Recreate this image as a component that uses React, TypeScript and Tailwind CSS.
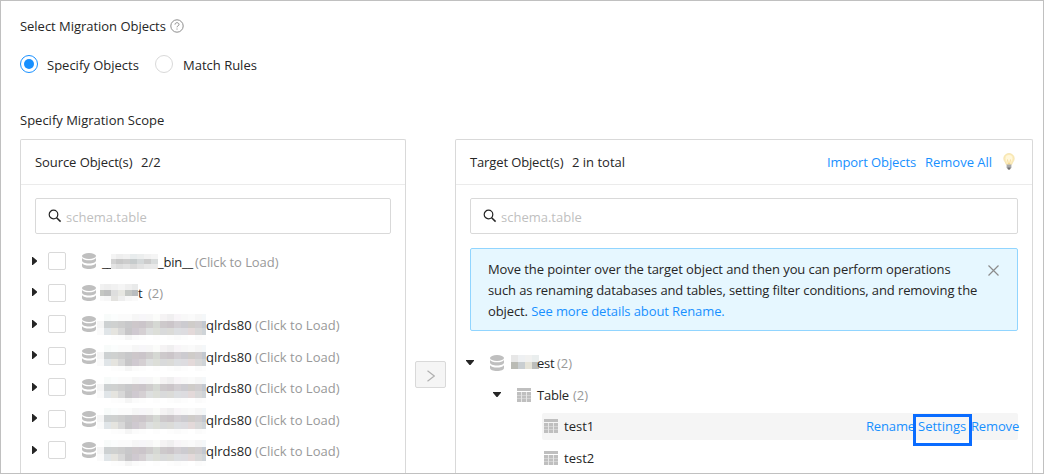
import React from "react";

const mosaicBin = [
  "#f4f4f4 #eeeeee #f1f1f1 #e8eced #eceeee #f2f2f2 #f5f5f5",
  "#d2d2d2 #c8c8c8 #cdcdcd #c6cbcc #d4d8d9 #cccccc #d9dcdc",
  "#e4e4e4 #dddddd #e2e2e2 #dadada #e2e2e2 #e8e8e8 #e9e9e9",
];

const mosaicName = [
  "#ffffff #f8fbfa #fbfdfd #fbfbfb #fbfbfb #f6f6f6 #f7f6f9 #f7f7f7 #fbfcfa #f5f3f4 #f0eff0 #f8f5f8 #f8f8f8 #fafafa #f6f6f6 #f4f7f9",
  "#f5f5f5 #cdd1d2 #cfd1d0 #cdcdcd #c8c8ca #cdc7ca #cbc5ca #cfcdcd #d5d8d3 #cdc9cb #cbc5c9 #d2ced2 #cccbd0 #cfccc9 #d0cdcf #c2c8d0",
  "#fafafa #e0e5e8 #e5e4df #d8d8d8 #c7c6c8 #cfc9d0 #d5d0d3 #dddfdf #dcded8 #d9dadb #dbdbd8 #dcdee1 #dddce0 #e3d9d9 #d8d8d8 #cfd4d8",
  "#ffffff #ffffff #fdfdfd #fcfcfc #f5f5f5 #fbfbfb #fdfdfd #ffffff #fdfdfd #ffffff #fdfdfd #fbfbfb #fdfdfd #ffffff #fbfbfb #fdfdfd",
];

const mosaicDb = [
  "#f1f1f1 #eeeeee #f1f1f1 #f5f5f5 #efefef #e9eaea",
  "#c5c7c3 #bfc0c0 #dedede #e7e7e2 #c5c8c5 #b9bdc0",
  "#fafafa #f7f7f7 #e3e2df #eeeeee #f7f7f7 #fafafa",
];

const mosaicTarget = ["#e7e7e7 #eef0f2 #f1f1f0 #eaeeee", "#babbb5 #c9ced1 #e5e3d8 #bbbdbb"];

function Mosaic({ rows, grid }: { rows: string[]; grid: string }) {
  return (
    <span className={`grid shrink-0 ${grid}`}>
      {rows.flatMap((r, i) => r.split(" ").map((c, j) => <span key={`${i}-${j}`} className="h-full" style={{ backgroundColor: c }} />))}
    </span>
  );
}

function Database() {
  return (
    <svg width="14" height="16" viewBox="0 0 14 16" fill="#bfbfbf" className="shrink-0">
      <ellipse cx="7" cy="3" rx="7" ry="3" />
      <path d="M0 5c1 1.700 4 2.300 7 2.300S13 6.700 14 5v2.600c0 1.700-3.100 3-7 3s-7-1.300-7-3z" />
      <path d="M0 10.200c1 1.700 4 2.300 7 2.300s6-.6 7-2.300V13c0 1.700-3.100 3-7 3s-7-1.300-7-3z" />
    </svg>
  );
}

function TableIcon() {
  return (
    <svg width="14" height="14" viewBox="0 0 14 14" fill="#bfbfbf" className="shrink-0">
      <path d="M0 4h14v10H0z" fill="#e6e6e6" />
      <path d="M0 0h14v3H0zM0 4h4v3H0zM5 4h4v3H5zM10 4h4v3h-4zM0 7.500h4v3H0zM5 7.500h4v3H5zM10 7.500h4v3h-4zM0 11h4v3H0zM5 11h4v3H5zM10 11h4v3h-4z" />
    </svg>
  );
}

function Search() {
  return (
    <svg width="14" height="14" viewBox="0 0 14 14" fill="none" stroke="#262626" strokeWidth="1.200" className="shrink-0">
      <circle cx="5.500" cy="5.500" r="4.300" />
      <path d="M8.600 8.700 12.600 12.600" strokeWidth="1.600" />
    </svg>
  );
}

function Bulb() {
  return (
    <svg width="12" height="17" viewBox="0 0 12 17" className="-mt-[2px] shrink-0">
      <path d="M6 .6C2.900.6.8 2.800.8 5.600c0 2.400 1.900 3.600 2.500 6h5.400c.6-2.400 2.500-3.600 2.500-6C11.200 2.800 9.100.6 6 .6z" fill="#fdedbb" stroke="#f1dfaa" strokeWidth=".8" />
      <path d="M6 2C4 2 2.600 3.500 2.600 5.500c0 1.500 1.200 2.600 1.800 4.500h3.200C8.200 8 9.400 7 9.400 5.500 9.400 3.500 8 2 6 2z" fill="#fff7db" />
      <path d="M4.500 6.500 5.500 11h1l1-4.500" fill="none" stroke="#f0cf7c" strokeWidth=".7" />
      <path d="M3.600 11.500h4.800v3.200L7 16.500H5l-1.400-1.800z" fill="#a9a9a9" />
      <path d="M4.500 14.500h3L6.800 16.500H5.200z" fill="#707070" />
    </svg>
  );
}

function Caret({ down }: { down?: boolean }) {
  return down ? (
    <svg width="8" height="5" viewBox="0 0 8 5" fill="#262626" className="-mt-px mr-px shrink-0"><path d="M0 0h8v.8L4.500 5h-1L0 .8z" /></svg>
  ) : (
    <svg width="5" height="8" viewBox="0 0 5 8" fill="#262626" className="-mt-px shrink-0"><path d="M0 0h.8L5 3.500v1L.8 8H0z" /></svg>
  );
}

function SearchBox() {
  return (
    <div className="flex h-9 items-center rounded-[2px] border border-[#d9d9d9] pl-[12px]">
      <Search />
      <span className="ml-[4px] mt-[2px] text-[#bfbfbf]">schema.table</span>
    </div>
  );
}

function SourceRow({ children }: { children: React.ReactNode }) {
  return (
    <div className="flex h-[31.500px] items-center pl-[11px]">
      <Caret />
      <span className="ml-[11px] size-[18px] shrink-0 rounded-[2px] border border-[#d9d9d9]" />
      <span className="ml-4 flex"><Database /></span>
      {children}
    </div>
  );
}

export default function App() {
  return (
    <div className="flex h-[474px] w-[1044px] flex-col overflow-hidden border border-[#c0c0c0] bg-white pl-[19px] font-['Open_Sans','Noto_Sans',sans-serif] text-[13px] leading-[20px] whitespace-nowrap text-[#262626]">
      <div className="mt-[15px] flex items-center">
        <span className="w-[150px] tracking-[-0.03px]">Select Migration Objects</span>
        <svg width="14" height="14" viewBox="0 0 14 14" fill="none" stroke="#8c8c8c">
          <circle cx="7" cy="7" r="6.200" />
          <path d="M5 5.600c0-1.200.9-1.900 2-1.900s2 .7 2 1.800c0 1.400-2 1.300-2 2.800M7 9.500v1.100" />
        </svg>
      </div>
      <div className="mt-[17px] flex items-center">
        <span className="flex size-[18px] items-center justify-center rounded-full border border-[#1890ff]"><span className="size-[10px] rounded-full bg-[#1890ff]" /></span>
        <span className="mt-[2px] ml-[9px] w-[108px]">Specify Objects</span>
        <span className="size-[18px] rounded-full border border-[#d9d9d9]" />
        <span className="mt-[2px] ml-[10px]">Match Rules</span>
      </div>
      <div className="mt-[35px]">Specify Migration Scope</div>
      <div className="mt-[9px] flex min-h-0 flex-1">
        <section className="h-full w-[386px] shrink-0 overflow-hidden rounded-t-[2px] border border-b-0 border-[#d9d9d9]">
          <header className="flex h-[45px] items-center border-b border-[#ebebeb] pl-[14px]">
            <span className="w-[106px] tracking-[-0.07px]">Source Object(s)</span><span>2/2</span>
          </header>
          <div className="mx-[14px] mt-[13px]"><SearchBox /></div>
          <div className="mt-[11.500px]">
            <SourceRow>
              <span className="mt-[2px] ml-[6px] w-[9px] tracking-[-1px]">__</span>
              <Mosaic grid="grid-cols-[5px_7px_7px_7px_7px_7px_7px] h-[15px]" rows={mosaicBin} />
              <span className="mt-[2px] w-[37px] tracking-[-0.2px]">_bin__</span><span className="mt-[2px] tracking-[-0.07px] text-[#999]">(Click to Load)</span>
            </SourceRow>
            <SourceRow>
              <span className="ml-1 flex"><Mosaic grid="grid-cols-[4px_7px_7px_7px_7px_6px] h-[17px]" rows={mosaicDb} /></span>
              <span className="mt-px w-[10px]">t</span><span className="mt-px text-[#999]">(2)</span>
            </SourceRow>
            {[0, 1, 2, 3, 4].map((i) => (
              <SourceRow key={i}>
                <span className="mt-[5px] ml-px flex"><Mosaic grid="grid-cols-[7px_7px_7px_7px_7px_7px_7px_7px_7px_7px_7px_7px_7px_7px_7px_4px] grid-rows-[7px_7px_7px_5px]" rows={mosaicName} /></span>
                <span className="mt-[2px] w-[49px]">qlrds80</span><span className="mt-[2px] text-[#999]">(Click to Load)</span>
              </SourceRow>
            ))}
          </div>
        </section>
        <div className="flex w-[49px] shrink-0 justify-center pt-[222px]">
          <button className="flex h-[27px] w-[31px] items-center justify-center rounded-[2px] border border-[#d9d9d9] bg-[#f5f5f5]">
            <svg width="8" height="12" viewBox="0 0 8 12" fill="none" stroke="#b0b0b0" strokeWidth="1.200" className="mt-[2px]"><path d="m.5.800 6.800 5.200-6.800 5.200" /></svg>
          </button>
        </div>
        <section className="h-full w-[578px] shrink-0 overflow-hidden rounded-t-[2px] border border-b-0 border-[#d9d9d9]">
          <header className="flex h-[45px] items-center border-b border-[#ebebeb] pr-[17px] pl-[14px]">
            <span className="w-[102px] tracking-[-0.13px]">Target Object(s)</span><span>2 in total</span>
            <span className="ml-auto w-[98px] tracking-[-0.1px] text-[#1890ff]">Import Objects</span>
            <span className="w-[78px] text-[#1890ff]">Remove All</span>
            <Bulb />
          </header>
          <div className="mx-[14px] mt-[13px]"><SearchBox /></div>
          <div className="mx-[14px] mt-[14px] flex h-[83px] rounded-[2px] border border-[#91d5ff] bg-[#e6f7ff] pt-[10px] pl-[17px] leading-[21px]">
            <div>
              <p className="tracking-[-0.08px]">Move the pointer over the target object and then you can perform operations</p>
              <p className="tracking-[-0.11px]">such as renaming databases and tables, setting filter conditions, and removing the</p>
              <p className="tracking-[-0.1px]">object. <span className="text-[#1890ff]">See more details about Rename.</span></p>
            </div>
            <svg width="11" height="11" viewBox="0 0 11 11" fill="none" stroke="#8c8c8c" strokeWidth="1.200" className="mt-[6px] mr-[18px] ml-auto"><path d="m.5.500 10 10m0-10-10 10" /></svg>
          </div>
          <div className="mt-[16.500px] mr-[14px]">
            <div className="flex h-[31.500px] items-center pl-[10px]">
              <Caret down /><span className="ml-[15px] flex"><Database /></span>
              <span className="ml-[7px] flex"><Mosaic grid="grid-cols-[7px_7px_7px_7px] h-[14px] -mt-[3px]" rows={mosaicTarget} /></span>
              <span className="-ml-[2px] w-[20px] tracking-[-0.2px]">est</span><span className="text-[#999]">(2)</span>
            </div>
            <div className="flex h-[31.500px] items-center pl-[37px]">
              <Caret down /><span className="ml-[15px] flex"><TableIcon /></span><span className="mt-px ml-[6px] w-[36px] tracking-[-0.2px]">Table</span><span className="mt-px text-[#999]">(2)</span>
            </div>
            <div className="ml-[86px] flex h-[31.500px] items-center">
              <div className="relative flex h-[27px] flex-1 items-center rounded-[2px] bg-[#f5f5f5] pl-[2px]">
                <TableIcon /><span className="ml-[6px]">test1</span>
                <span className="ml-auto w-[52px] tracking-[-0.15px] text-[#1890ff]">Rename</span>
                <span className="w-[53px] text-[#1890ff]">Settings</span>
                <span className="w-[47px] tracking-[-0.15px] text-[#1890ff]">Remove</span>
                <span className="absolute top-px right-[46px] h-[32px] w-[59px] border-[3px] border-[#0a6cff]" />
              </div>
            </div>
            <div className="ml-[88px] flex h-[31.500px] items-center"><TableIcon /><span className="mt-px ml-[6px]">test2</span></div>
          </div>
        </section>
      </div>
    </div>
  );
}
